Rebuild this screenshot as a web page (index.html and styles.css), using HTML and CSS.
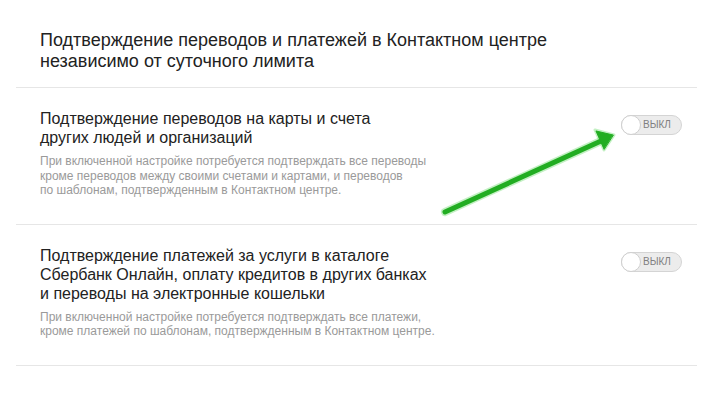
FILE: index.html
```html
<!DOCTYPE html>
<html lang="ru">
<head>
  <meta charset="UTF-8">
  <title>Настройки подтверждения</title>
  <link rel="stylesheet" href="styles.css">
</head>
<body>
  <div class="settings">
    <h2 class="settings-title">Подтверждение переводов и платежей в Контактном центре<br>независимо от суточного лимита</h2>

    <div class="option">
      <div class="option-text">
        <div class="option-name">Подтверждение переводов на карты и счета<br>других людей и организаций</div>
        <div class="option-desc">При включенной настройке потребуется подтверждать все переводы<br>кроме переводов между своими счетами и картами, и переводов<br>по шаблонам, подтвержденным в Контактном центре.</div>
      </div>
      <div class="switch"><span class="knob"></span><span class="switch-label">выкл</span></div>
    </div>

    <div class="option">
      <div class="option-text">
        <div class="option-name">Подтверждение платежей за услуги в каталоге<br>Сбербанк Онлайн, оплату кредитов в других банках<br>и переводы на электронные кошельки</div>
        <div class="option-desc">При включенной настройке потребуется подтверждать все платежи,<br>кроме платежей по шаблонам, подтвержденным в Контактном центре.</div>
      </div>
      <div class="switch"><span class="knob"></span><span class="switch-label">выкл</span></div>
    </div>

    <!-- annotation arrow over the first switch -->
    <svg class="arrow" width="712" height="410" viewBox="0 0 712 410">
      <g stroke="#9be69b" stroke-opacity="0.6" fill="#9be69b" fill-opacity="0.6" stroke-linejoin="round" stroke-linecap="round">
        <line x1="445" y1="212" x2="601" y2="141" stroke-width="8"/>
        <polygon points="614,135 595,130 604,150" stroke-width="3"/>
      </g>
      <g stroke="#22ad22" fill="#22ad22" stroke-linejoin="round" stroke-linecap="round">
        <line x1="445" y1="212" x2="601" y2="141" stroke-width="5"/>
        <polygon points="613,135 596,131 604,149" stroke-width="1"/>
      </g>
    </svg>
  </div>
</body>
</html>
```

FILE: styles.css
```css
body {
  margin: 0;
  background: #fff;
  font-family: "Liberation Sans", Arial, sans-serif;
  color: #222;
}

.settings {
  width: 681px;
  margin-left: 16px;
  padding-top: 30px;
}

.settings-title {
  margin: 0;
  padding: 0 24px 15px;
  font-size: 18px;
  font-weight: normal;
  line-height: 21px;
  border-bottom: 1px solid #e6e6e6;
}

.option {
  display: flex;
  justify-content: space-between;
  align-items: flex-start;
  padding: 21px 15px 26px 24px;
  border-bottom: 1px solid #e6e6e6;
}

.option-name {
  font-size: 16px;
  line-height: 19px;
  color: #222;
}

.option-desc {
  margin-top: 7px;
  font-size: 12px;
  line-height: 14.5px;
  color: #9a9a9a;
}

.switch {
  position: relative;
  width: 61px;
  height: 20px;
  margin-top: 6px;
  box-sizing: border-box;
  border: 1px solid #d4d4d4;
  border-radius: 10px;
  background: #ececec;
}

.knob {
  position: absolute;
  left: -1px;
  top: -1px;
  width: 20px;
  height: 20px;
  box-sizing: border-box;
  border: 1px solid #cfcfcf;
  border-radius: 50%;
  background: #fff;
}

.switch-label {
  position: absolute;
  left: 21px;
  top: 3px;
  font-size: 10px;
  text-transform: uppercase;
  color: #808080;
}

.arrow {
  position: absolute;
  left: 0;
  top: 0;
  pointer-events: none;
}
```
